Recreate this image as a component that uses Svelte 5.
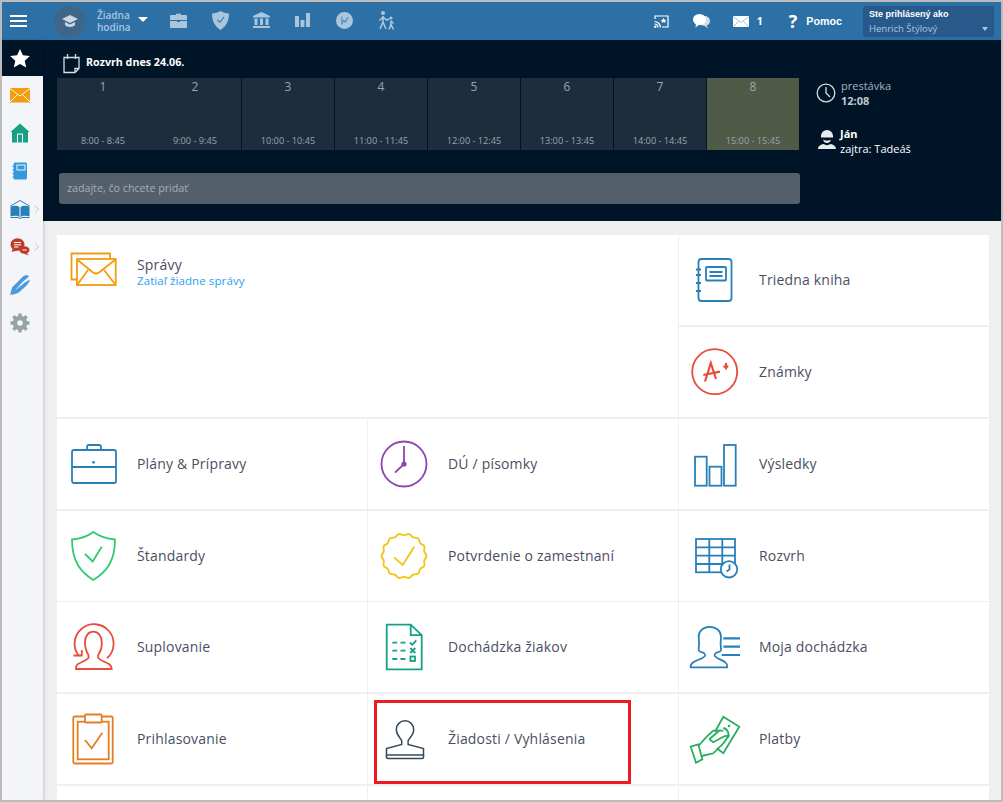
<script>
  const lessons = [
    ['1', '8:00 - 8:45'],
    ['2', '9:00 - 9:45'],
    ['3', '10:00 - 10:45'],
    ['4', '11:00 - 11:45'],
    ['5', '12:00 - 12:45'],
    ['6', '13:00 - 13:45'],
    ['7', '14:00 - 14:45'],
    ['8', '15:00 - 15:45']
  ];

  // wavy seal outline for the "Potvrdenie" tile
  function sealPath(cx, cy, r, bumps) {
    let d = '';
    for (let i = 0; i <= 180; i++) {
      const a = (i / 180) * Math.PI * 2;
      const rr = r + Math.cos(a * bumps) * 0.9;
      const x = cx + Math.cos(a) * rr;
      const y = cy + Math.sin(a) * rr;
      d += (i ? 'L' : 'M') + x.toFixed(2) + ' ' + y.toFixed(2);
    }
    return d + 'Z';
  }
  const seal = sealPath(22, 32, 21.6, 14);
</script>

{#snippet tile(label, color, icon, extra = '')}
  <div class="tile {extra}">
    <svg class="ic {color}" width="64" height="64" viewBox="0 0 64 64">{@render icon()}</svg>
    <span class="label">{label}</span>
  </div>
{/snippet}

{#snippet notebook()}
  <path d="M5.500 14q0-3 3-3h27q3 0 3 3v36q0 3-3 3h-27q-3 0-3-3z" />
  <path d="M3 21.500h5M3 27h5M3 35h5M3 43h5" />
  <rect x="13" y="19" width="20" height="13.500" rx="1" />
  <path d="M16.500 24h13M16.500 28h13" />
{/snippet}
{#snippet grade()}
  <circle cx="21.700" cy="31.700" r="22.500" />
  <path class="thick" d="M12 41.500L17.800 23l5.200 16M10.300 35L27 31.700M30.300 26.700h5M33 23v6.500" />
{/snippet}
{#snippet briefcase()}
  <rect x="1" y="18" width="44" height="33" rx="2" />
  <path d="M1 35h44M16 18v-3q0-2 2-2h10q2 0 2 2v3" />
  <circle class="solid" cx="22.500" cy="30.300" r="1.400" />
{/snippet}
{#snippet homework()}
  <circle cx="22" cy="32" r="22.500" />
  <path d="M22 14v18l-9 8.700" />
  <circle class="solid" cx="22" cy="32" r="2.600" />
{/snippet}
{#snippet bars()}
  <rect x="2" y="24.700" width="11.700" height="29" />
  <rect x="16.500" y="34.700" width="12" height="19" />
  <rect x="31" y="13" width="11.700" height="40.700" />
{/snippet}
{#snippet shield()}
  <path d="M22.300 8C17 12 8 15 1 15.500 1 38 10 48 22.300 56 35 48 44 38 44 15.500 37 15 28 12 22.300 8Z" />
  <path d="M14 30l7.700 7.500L30.700 22.700" />
{/snippet}
{#snippet sealIcon()}
  <path d={seal} />
  <path d="M12 33.300l8.700 7.700 11.600-18.300" />
{/snippet}
{#snippet timetable()}
  <rect x="3" y="15" width="39" height="33.300" />
  <path d="M3 23.300h39M3 31.700h39M3 40h39M16.300 15v33.300M29.300 15v33.300" />
  <circle class="white" cx="36" cy="45.300" r="8.200" />
  <path d="M36.500 40.500v5l-3 2" />
{/snippet}
{#snippet substitute()}
  <path d="M36 43.300A19.500 19.500 0 1 0 8 41" />
  <path d="M2.500 40.500h8.300v-5.500" />
  <path d="M5 54h35.700c0-7-9-6-13.500-11v-3c2-3 4-8 3.500-13 0-6-3.500-10.300-8.400-10.300s-8.300 4.300-8.300 10.300c0 5 1.500 10 3.500 13v3c-4.500 5-13.500 4-12.500 11z" />
{/snippet}
{#snippet attendance()}
  <path d="M4.700 9.700h24l11 10.500v34.100h-35z" />
  <path d="M28.700 9.700v10.500h11" />
  <path d="M10.300 27.700h5M18.500 27.700h5M10.300 35.700h5M18.500 35.700h5M10.300 44h5M18.500 44h5" />
  <path d="M28 27.500l2.300 2.300 4-4.500M28.300 33l5 5M33.300 33l-5 5" />
  <rect x="28.500" y="41.500" width="4.500" height="4.500" />
{/snippet}
{#snippet myAttendance()}
  <path d="M-2.300 52.300h36.600c.7-7-9-7-12.300-11-1-1.500-.5-2 1-3.500 4.500-1 5.500-2 5-4-1-6.500 0-9 0-12 0-6-5-10-11.300-10-6.500 0-11 4-11 10 0 3 1 5.500 0 12-.5 2 .5 3 5 4 1.500 1.500 2 2 1 3.500-3.300 4-14.800 4-14 11z" />
  <path class="thick" d="M30.300 23.300h16.700M30.300 31.700h16.700M28.700 40h18.300" />
{/snippet}
{#snippet application()}
  <g class="thin">
    <path d="M19.700 37.500v-3.500c0-2.500-5.400-5-5.400-11.500a8.700 8.700 0 0 1 17.400 0c0 6.500-5.600 9-5.600 11.500v3.500L41.500 41.500V48H4.500v-6.500z" />
    <path d="M4.500 48v2c0 1 1 1.500 2 1.500h33.500c1 0 1.500-.5 1.500-1.500v-2" />
  </g>
{/snippet}
{#snippet clipboard()}
  <rect x="2.300" y="9.500" width="39.400" height="47" rx="1.500" />
  <rect x="6.700" y="14.700" width="31" height="37.600" />
  <rect class="white" x="14" y="7.500" width="16.700" height="8" rx="1" />
  <path d="M14 33l6.700 8.300L31.300 25.700" />
{/snippet}
{#snippet payments()}
  <path d="M22 24.700L30.300 9.700l16 10-16 26.600-6.600-5" />
  <path d="M30.300 21a6.500 6.500 0 0 1 4 10" />
  <circle class="solid" cx="36" cy="19" r="1.300" />
  <path d="M-2.300 39.700l7.600-2.400 4 15-6.300 3.400z" />
  <path d="M5.300 39l8.400-9.300 6.600-6h10M16.300 32.300l10.700-9.300M16.300 32.300l4 3 10-5.600c3-1.200 5-1 6 0M8.700 49l11.600-2.700 10-10L36.300 28" />
{/snippet}

<div class="frame">
  <header class="topbar">
    <button class="burger" aria-label="menu"><i></i><i></i><i></i></button>
    <div class="avatar">
      <svg width="16" height="14" viewBox="0 0 16 14"><path fill="#c9d8e4" d="M8 1L0 5l8 4 8-4zM3 8v3c2 2.500 8 2.500 10 0V8L8 10.500z" /></svg>
    </div>
    <div class="lesson">Žiadna<br />hodina</div>
    <span class="caret"></span>
    <nav class="nav-icons">
      <span class="nav-item">
        <svg width="17" height="15" viewBox="0 0 17 15"><path d="M6 2V.800h5V2h5q1 0 1 1v4H0V3q0-1 1-1zM0 8h7v1h3V8h7v6q0 1-1 1H1q-1 0-1-1z" /></svg>
      </span>
      <span class="nav-item">
        <svg width="17" height="19" viewBox="0 0 17 19"><path fill-rule="evenodd" d="M8.500 0C6 1.500 3 2.300 0 2.500 0 10 3 15.500 8.500 19 14 15.500 17 10 17 2.500 14 2.300 11 1.500 8.500 0zM5 9l3 3 4.500-6-.8-.5L8 10.500 5.700 8.300z" /></svg>
      </span>
      <span class="nav-item">
        <svg width="17" height="16" viewBox="0 0 17 16"><path d="M8.500 0L17 4v1.500H0V4zM1.500 6.500h3V13h-3zM7 6.500h3V13H7zM12.500 6.500h3V13h-3zM0 14h17v2H0z" /></svg>
      </span>
      <span class="nav-item">
        <svg width="15" height="14" viewBox="0 0 15 14"><path d="M0 3h4v11H0zM5.500 7h4v7h-4zM11 0h4v14h-4z" /></svg>
      </span>
      <span class="nav-item">
        <svg width="17" height="17" viewBox="0 0 17 17"><path fill-rule="evenodd" d="M8.500 0a8.500 8.500 0 1 0 0 17 8.500 8.500 0 0 0 0-17zM5.500 4.500v8h.8l.9-3.500 2.300 1.500 3-5-.7-.4L9.300 9.300 7 7.800l-.8 2.400V4.500z" /></svg>
      </span>
      <span class="nav-item">
        <svg width="18" height="19" viewBox="0 0 18 19"><circle cx="6" cy="2" r="2" /><circle cx="14" cy="7" r="1.600" /><path class="walk" d="M6 5v6M6 11l-3 7M6 11l3 7M6 6L2.500 9.500M6 6l3.500 3 3-1M14 9.500v4M14 13.500l-2 5M14 13.500l2.500 5M14 10l2.500 2.500" /></svg>
      </span>
    </nav>

    <div class="top-right">
      <svg class="t-cast" width="15" height="13" viewBox="0 0 15 13"><path fill="none" stroke="#fff" stroke-width="1.200" d="M1 4V1h13v11H8" /><path fill="none" stroke="#fff" stroke-width="1.200" d="M.500 6.500a6 6 0 0 1 6 6M.500 9a3.500 3.500 0 0 1 3.500 3.500" /><circle cx="1.300" cy="11.700" r="1.200" fill="#fff" /><path fill="#fff" d="M9.500 3l1 1.800 1.800.2-1.300 1.200.4 1.800-1.900-1-1.900 1 .4-1.800L6.700 5l1.800-.2z" /></svg>
      <svg class="t-chat" width="17" height="15" viewBox="0 0 17 15"><ellipse cx="11.500" cy="7" rx="5.500" ry="5" fill="#cfe0ec" /><path d="M13 10l2 4.500-4-3z" fill="#cfe0ec" /><ellipse cx="6.500" cy="5.500" rx="6.500" ry="5.500" fill="#fff" /><path d="M3 9L2.500 13.500 7 10z" fill="#fff" /></svg>
      <svg class="t-mail" width="16" height="11" viewBox="0 0 16 11"><rect width="16" height="11" fill="#fff" /><path d="M0 .500L8 6.500l8-6M0 11l5.500-5.500M16 11l-5.500-5.500" fill="none" stroke="#8fb4d2" stroke-width=".8" /></svg>
      <span class="t-count">1</span>
      <span class="t-help">?</span>
      <span class="t-pomoc">Pomoc</span>
      <div class="user">
        <b>Ste prihlásený ako</b>
        <span>Henrich Štýlový</span>
        <i class="user-caret"></i>
      </div>
    </div>
  </header>

  <div class="body">
    <aside class="sidebar">
      <div class="star">
        <svg width="20" height="19" viewBox="0 0 20 19"><path fill="#fff" d="M10 0l2.900 6.300 7 .8-5.200 4.600 1.500 6.900L10 15.100 3.800 18.600l1.500-6.900L.100 7.100l7-.8z" /></svg>
      </div>
      <div class="side-item">
        <svg width="20" height="16" viewBox="0 0 20 16"><rect y="1" width="20" height="14.500" fill="#f39c12" /><path d="M0 1.500l10 7.500 10-7.500M0 15l7-7M20 15l-7-7" fill="none" stroke="#fff" stroke-width=".9" /></svg>
      </div>
      <div class="side-item">
        <svg width="20" height="20" viewBox="0 0 20 20"><path fill="#16a085" d="M10 .500l9.500 8.500H18v10.500H2V9H.500z" /><path fill="none" stroke="#fff" stroke-width="1" d="M7.500 19.500V11h5v8.500" /></svg>
      </div>
      <div class="side-item">
        <svg width="20" height="18" viewBox="0 0 20 18"><rect x="3.500" y=".500" width="13.500" height="17" rx="1.500" fill="#3498db" /><rect x="7" y="3" width="8" height="5" fill="none" stroke="#fff" stroke-width=".9" /><path d="M2.500 4.500h2M2.500 8h2M2.500 11.500h2M2.500 15h2" stroke="#3498db" stroke-width="1" /></svg>
      </div>
      <div class="side-item has-sub">
        <svg width="20" height="19" viewBox="0 0 20 19"><path fill="none" stroke="#2980b9" stroke-width="1" d="M.500 6L10 .500 19.500 6" /><path fill="#2980b9" d="M.500 6.500c3.500-1 7-1 9 .800v9.700c-2-1.500-5.500-1.500-9-.500zM19.500 6.500c-3.500-1-7-1-9 .800v9.700c2-1.500 5.500-1.500 9-.500z" /><path fill="none" stroke="#2980b9" stroke-width="1" d="M.500 17.500h7.500l2 1 2-1h7.500" /></svg>
      </div>
      <div class="side-item has-sub">
        <svg width="20" height="18" viewBox="0 0 20 18"><ellipse cx="7.500" cy="6.500" rx="7" ry="6.300" fill="#c0392b" /><path d="M3 10L1.500 14 7 12.500z" fill="#c0392b" /><ellipse cx="14.500" cy="12" rx="5" ry="3.800" fill="#c0392b" /><path d="M16 14.500l3 3-5-1.800z" fill="#c0392b" /><path d="M4 4.500h7M4 6.800h7M4 9h4.500M12.500 12h4" stroke="#fff" stroke-width="1" /></svg>
      </div>
      <div class="side-item">
        <svg width="20" height="20" viewBox="0 0 20 20"><path fill="#4a9bdc" d="M0 20l2-7.500L13 1.500c2-1.500 5-1.500 6-.5-1 2-4 3.500-7 6.500l-7 8c4-3 10-9 15-11-1 5-7 9-10 12-3 2.500-6 3-12 3.500z" /></svg>
      </div>
      <div class="side-item">
        <svg width="20" height="20" viewBox="0 0 20 20"><circle cx="10" cy="10" r="5" fill="none" stroke="#95a5a6" stroke-width="4.500" /><path stroke="#95a5a6" stroke-width="3.400" d="M10 .500v3.500M10 16v3.500M.500 10H4M16 10h3.500M3.300 3.300l2.500 2.500M14.200 14.200l2.500 2.500M3.300 16.700l2.500-2.500M14.200 5.800l2.500-2.500" /></svg>
      </div>
    </aside>

    <div class="content">
      <section class="panel">
        <div class="panel-left">
          <div class="title">
            <svg width="17" height="20" viewBox="0 0 17 20"><path fill="none" stroke="#d8dde2" stroke-width="1.300" d="M1 3.500h15v11l-4 4H1zM12 18.500v-4h4M4.500 0v5M12.500 0v5" /></svg>
            <b>Rozvrh dnes 24.06.</b>
          </div>
          <div class="lessons">
            {#each lessons as [num, time], i}
              <div class="lesson-cell" class:current={i === 7} class:joined={i === 1}>
                <span class="num">{num}</span>
                <span class="time">{time}</span>
              </div>
            {/each}
          </div>
          <div class="add-input">zadajte, čo chcete pridať</div>
        </div>
        <div class="panel-side">
          <div class="side-row clock">
            <svg width="20" height="20" viewBox="0 0 20 20"><circle cx="10" cy="10" r="8.800" fill="none" stroke="#d8dde2" stroke-width="1.300" /><path d="M10 4v6l4 4" fill="none" stroke="#d8dde2" stroke-width="1.300" /></svg>
            <div><span class="muted">prestávka</span><br /><b class="muted-b">12:08</b></div>
          </div>
          <div class="side-row teacher">
            <svg width="18" height="20" viewBox="0 0 18 20"><path fill="#e8eaec" d="M3 8.500V7a6 6 0 0 1 12 0v1.500zM5 10.500c2 1.500 6 1.500 8 0-.5 2.500-2.200 3.500-4 3.500s-3.500-1-4-3.500zM0 20c0-3 3-4.500 5.500-5 2 1.500 5 1.500 7 0 2.500.5 5.500 2 5.500 5z" /></svg>
            <div><b>Ján</b><br /><span>zajtra: Tadeáš</span></div>
          </div>
        </div>
      </section>

      <main class="tiles">
        <div class="tile messages">
          <svg class="ic orange" width="64" height="64" viewBox="0 0 64 64">
            <path d="M39 14V8.500H.500v26H6" />
            <rect x="6" y="14" width="38.700" height="26" />
            <path d="M6 14.500l16 13q3 2 6 0l16.500-13M6 40l11-15M44.700 40L33 25" />
          </svg>
          <div class="msg-text">
            <span class="label">Správy</span>
            <a href="#top" class="msg-link">Zatiaľ žiadne správy</a>
          </div>
        </div>
        {@render tile('Triedna kniha', 'blue', notebook)}
        {@render tile('Známky', 'red', grade)}
        {@render tile('Plány & Prípravy', 'blue', briefcase)}
        {@render tile('DÚ / písomky', 'purple', homework)}
        {@render tile('Výsledky', 'blue', bars)}
        {@render tile('Štandardy', 'green', shield)}
        {@render tile('Potvrdenie o zamestnaní', 'yellow', sealIcon)}
        {@render tile('Rozvrh', 'blue', timetable)}
        {@render tile('Suplovanie', 'red', substitute)}
        {@render tile('Dochádzka žiakov', 'teal', attendance)}
        {@render tile('Moja dochádzka', 'blue', myAttendance)}
        {@render tile('Prihlasovanie', 'carrot', clipboard)}
        {@render tile('Žiadosti / Vyhlásenia', 'navy', application, 'marked')}
        {@render tile('Platby', 'money', payments)}
        <div class="tile"></div>
        <div class="tile"></div>
        <div class="tile"></div>
      </main>
    </div>
  </div>
</div>

<style>
  :global(body) {
    margin: 0;
    overflow: hidden;
    font-family: "Open Sans", "Liberation Sans", sans-serif;
  }

  .frame {
    box-sizing: border-box;
    width: 1003px;
    height: 802px;
    border: 2px solid #bcbcbc;
    display: flex;
    flex-direction: column;
    overflow: hidden;
    background: #efefef;
  }

  /* top bar */
  .topbar {
    height: 38px;
    flex: none;
    background: #2d70a6;
    display: flex;
    align-items: center;
    color: #a9c6df;
  }

  .burger {
    width: 17px;
    height: 12px;
    margin: -1px 0 0 8px;
    padding: 0;
    border: 0;
    background: none;
    display: flex;
    flex-direction: column;
    justify-content: space-between;
  }

  .burger i {
    height: 2px;
    background: #fff;
  }

  .avatar {
    width: 31px;
    height: 31px;
    margin-left: 27px;
    border-radius: 50%;
    background: #3f6687;
    display: flex;
    align-items: center;
    justify-content: center;
  }

  .lesson {
    width: 41px;
    margin-left: 12px;
    font-size: 10px;
    line-height: 12px;
    font-weight: 600;
  }

  .caret {
    width: 0;
    height: 0;
    border-left: 5px solid transparent;
    border-right: 5px solid transparent;
    border-top: 5px solid #fff;
    margin-top: -3px;
  }

  .nav-icons {
    display: flex;
    margin-left: 10px;
  }

  .nav-item {
    width: 41.4px;
    display: flex;
    justify-content: center;
    align-items: center;
    height: 24px;
    margin-top: -2px;
  }

  .nav-item svg {
    fill: #a9c6df;
  }

  .nav-item .walk {
    fill: none;
    stroke: #a9c6df;
    stroke-width: 1.6;
  }

  .top-right {
    margin-left: auto;
    display: flex;
    align-items: center;
    color: #fff;
    font-weight: 700;
  }

  .t-chat {
    margin-left: 24px;
  }

  .t-mail {
    margin-left: 23px;
  }

  .t-count {
    margin-left: 8px;
    width: 8px;
    font-size: 10.5px;
  }

  .t-help {
    margin-left: 24px;
    font-size: 18px;
    line-height: 20px;
  }

  .t-pomoc {
    margin-left: 9px;
    font-family: "Liberation Sans", Arial, sans-serif;
    font-size: 10.7px;
  }

  .user {
    position: relative;
    box-sizing: border-box;
    width: 131px;
    height: 31px;
    margin: 0 7px 0 21px;
    padding: 1px 6px;
    background: #27598a;
    border-radius: 2px;
    font-size: 9.5px;
    line-height: 14px;
    display: flex;
    flex-direction: column;
    gap: 1px;
  }

  .user b {
    font-family: "Liberation Sans", Arial, sans-serif;
    font-size: 9px;
  }

  .user span {
    font-weight: 400;
    color: #a9c6df;
  }

  .user-caret {
    position: absolute;
    right: 6px;
    bottom: 6px;
    border-left: 3.500px solid transparent;
    border-right: 3.500px solid transparent;
    border-top: 4px solid #a9c6df;
  }

  /* main layout */
  .body {
    flex: 1;
    display: flex;
    min-height: 0;
  }

  .sidebar {
    width: 41px;
    flex: none;
    background: #f3f5f9;
    box-shadow: 1px 0 3px rgba(0, 0, 0, 0.18);
    z-index: 1;
  }

  .star {
    height: 36px;
    background: #001428;
    display: flex;
    align-items: center;
    padding-left: 8px;
  }

  .side-item {
    position: relative;
    height: 38px;
    padding-left: 8px;
    display: flex;
    align-items: center;
  }

  .side-item svg {
    width: 20px;
  }

  .has-sub::after {
    content: "";
    position: absolute;
    left: 30px;
    top: 16px;
    width: 5px;
    height: 5px;
    border-top: 1px solid #d5d8dc;
    border-right: 1px solid #d5d8dc;
    transform: rotate(45deg);
  }

  .content {
    flex: 1;
    min-width: 0;
    display: flex;
    flex-direction: column;
  }

  /* timetable panel */
  .panel {
    height: 181px;
    flex: none;
    background: #001428;
    display: flex;
    box-sizing: border-box;
    padding: 11px 0 0 14px;
  }

  .panel-left {
    width: 742px;
    flex: none;
  }

  .title {
    height: 27px;
    display: flex;
    align-items: flex-start;
    gap: 6px;
    padding-left: 6px;
    box-sizing: border-box;
    color: #fff;
    font-size: 10.7px;
    line-height: 22px;
  }

  .title svg {
    margin-top: 3px;
  }

  .lessons {
    display: flex;
    height: 72px;
  }

  .lesson-cell {
    width: 92px;
    margin-left: 1px;
    background: #1e2d3d;
    display: flex;
    flex-direction: column;
    justify-content: space-between;
    align-items: center;
    box-sizing: border-box;
    padding: 1px 0 2px;
    color: #9aa5b0;
  }

  .lesson-cell:first-child,
  .lesson-cell.joined {
    margin-left: 0;
  }

  .lesson-cell.current {
    background: #4f5b47;
  }

  .num {
    font-size: 12px;
    line-height: 16px;
  }

  .time {
    font-size: 9.200px;
    line-height: 14px;
  }

  .add-input {
    box-sizing: border-box;
    height: 31px;
    margin: 23px 0 0 2px;
    width: 741px;
    padding-left: 8px;
    background: #535f6b;
    border-radius: 3px;
    color: #a7aeb5;
    font-size: 10.7px;
    line-height: 31px;
  }

  .panel-side {
    margin-left: 18px;
    padding-top: 27px;
    font-size: 11px;
    line-height: 15px;
    color: #fff;
  }

  .side-row {
    display: flex;
    gap: 5px;
  }

  .clock svg {
    margin-top: 5px;
    margin-left: -1px;
  }

  .muted {
    color: #a9b2bb;
  }

  .muted-b {
    color: #c2c8ce;
  }

  .teacher {
    margin-top: 18px;
    padding-left: 1px;
    gap: 5px;
    align-items: flex-start;
  }

  .teacher svg {
    margin-top: 3px;
  }

  .teacher div {
    margin-left: -1px;
  }

  /* tiles */
  .tiles {
    flex: 1;
    min-height: 0;
    overflow: hidden;
    display: grid;
    grid-template-columns: repeat(3, 310px);
    grid-auto-rows: 90px;
    column-gap: 1px;
    row-gap: 1.800px;
    padding: 14.300px 0 0 14px;
  }

  .tile {
    position: relative;
    background: #fff;
    display: flex;
    align-items: center;
    padding-left: 14px;
    box-sizing: border-box;
  }

  .ic {
    flex: none;
    margin-right: 2px;
    overflow: visible;
    fill: none;
    stroke: currentColor;
    stroke-width: 1.8;
  }

  .ic .solid {
    fill: currentColor;
    stroke: none;
  }

  .ic .white {
    fill: #fff;
  }

  .ic .thick {
    stroke-width: 2.2;
  }

  .ic .thin {
    stroke-width: 1.5;
  }

  .blue { color: #2980b9; }
  .red { color: #e74c3c; }
  .purple { color: #8e44ad; }
  .green { color: #2ecc71; }
  .yellow { color: #f1c40f; }
  .teal { color: #16a085; }
  .carrot { color: #e67e22; }
  .navy { color: #34495e; }
  .money { color: #27ae60; }
  .orange { color: #f39c12; }

  .label {
    margin-top: -1px;
    font-size: 14px;
    letter-spacing: 0.18px;
    color: #4a4f5f;
    white-space: nowrap;
  }

  .messages {
    grid-column: span 2;
    grid-row: span 2;
    align-items: flex-start;
    padding-top: 10px;
  }

  .msg-text {
    display: flex;
    flex-direction: column;
    margin-top: 10px;
    line-height: 14px;
  }

  .msg-text .label {
    margin-top: 0;
    line-height: 19px;
  }

  .msg-link {
    font-size: 11.5px;
    letter-spacing: 0.1px;
    color: #1fa2f0;
    text-decoration: none;
  }

  .marked::after {
    content: "";
    position: absolute;
    left: 6px;
    top: 6px;
    width: 257px;
    height: 84px;
    box-sizing: border-box;
    border: 3px solid #ed1c24;
  }
</style>
